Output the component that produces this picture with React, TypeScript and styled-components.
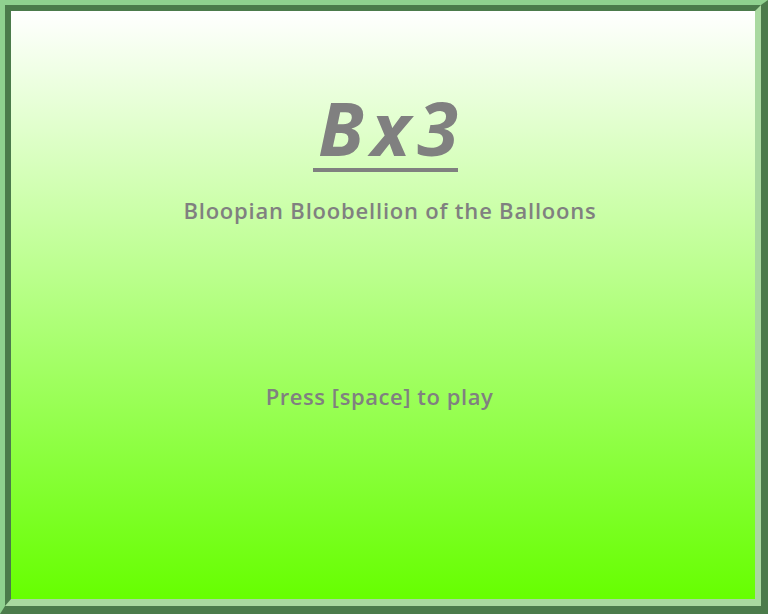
import React from "react";
import styled, { createGlobalStyle } from "styled-components";

const Global = createGlobalStyle`
  html, body { margin: 0; padding: 0; width: 768px; height: 614px; overflow: hidden; }
  #root { width: 768px; height: 614px; }
`;

const OuterFrame = styled.div`
  box-sizing: border-box;
  width: 768px;
  height: 614px;
  border-style: solid;
  border-width: 5px 7px 8px 5px;
  border-color: #8fd18f #4b7b4b #4b7b4b #8fd18f;
  display: flex;
`;

const InnerFrame = styled.div`
  box-sizing: border-box;
  flex: 1;
  border-style: solid;
  border-width: 6px 6px 7px 6px;
  border-color: #4b7b4b #a9d9a0 #a9d9a0 #4b7b4b;
  display: flex;
`;

const Screen = styled.main`
  flex: 1;
  background: linear-gradient(to bottom, #ffffff 0%, #66ff00 100%);
  display: flex;
  flex-direction: column;
  align-items: center;
  font-family: "Open Sans", "DejaVu Sans", sans-serif;
  color: #808080;
`;

const Title = styled.h1`
  margin: 80px 0 0 5px;
  width: 140px;
  white-space: nowrap;
  font-size: 74px;
  line-height: 74px;
  font-style: italic;
  font-weight: 700;
  letter-spacing: 7px;
  padding: 0 0 3px 5px;
  border-bottom: 4px solid #808080;
`;

const Subtitle = styled.h2`
  margin: 24px 0 0 14px;
  font-size: 22px;
  line-height: 28px;
  font-weight: 600;
  letter-spacing: 0.8px;
`;

const Prompt = styled.p`
  margin: 158px 7px 0 0;
  font-size: 22px;
  line-height: 28px;
  font-weight: 600;
  letter-spacing: 0.55px;
`;

export default function App() {
  return (
    <>
      <Global />
      <OuterFrame>
        <InnerFrame>
          <Screen>
            <Title>Bx3</Title>
            <Subtitle>Bloopian Bloobellion of the Balloons</Subtitle>
            <Prompt>Press [space] to play</Prompt>
          </Screen>
        </InnerFrame>
      </OuterFrame>
    </>
  );
}
